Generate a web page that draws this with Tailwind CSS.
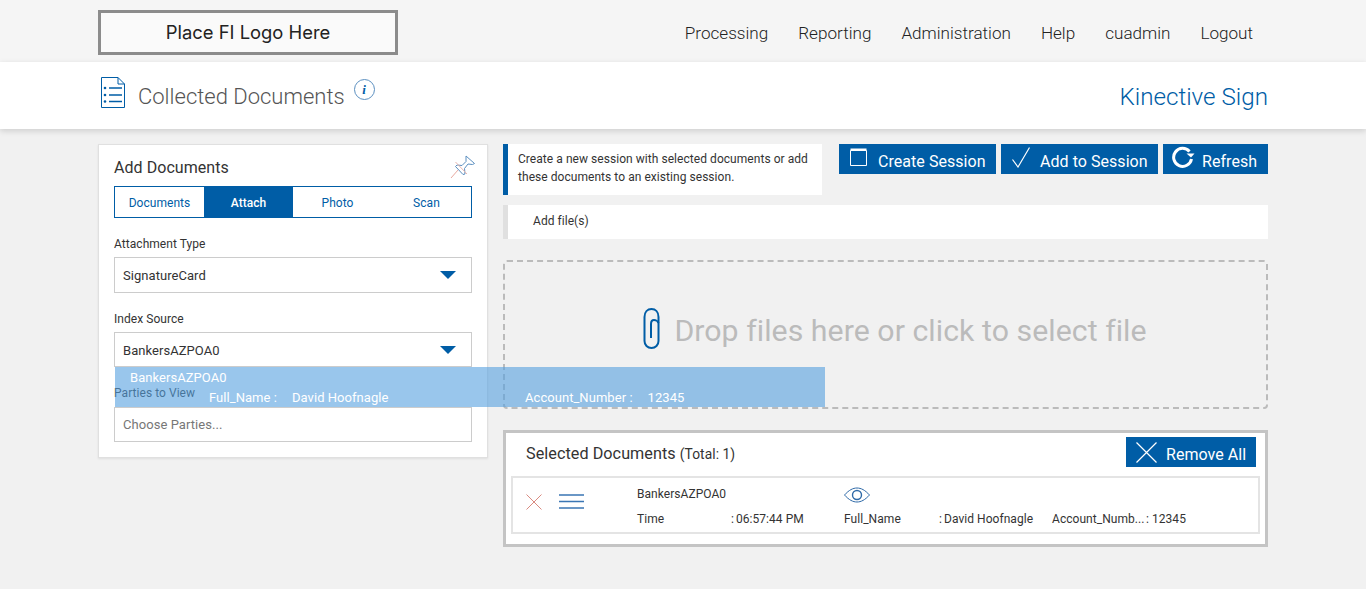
<!DOCTYPE html>
<html lang="en">
<head>
    <meta charset="UTF-8" />
    <meta name="viewport" content="width=device-width, initial-scale=1.0" />
    <title>Collected Documents</title>
    <script src="https://cdn.jsdelivr.net/npm/@tailwindcss/browser@4"></script>
</head>
<body class="h-[589px] overflow-hidden bg-[#f1f1f1] font-['Roboto',sans-serif] text-[#333]">
    <!-- Top nav -->
    <header class="h-[62px] bg-[#f5f5f5] px-[98px] pt-[10px] flex justify-between items-start">
        <div class="w-[300px] h-[45px] border-[3px] border-[#8c8c8c] bg-[#fafafa] flex items-center justify-center font-['Inter',sans-serif] text-[18.4px] text-[#222]">Place FI Logo Here</div>
        <nav class="flex gap-[30px] pr-[15px] pt-[13px] text-[17.1px] font-light text-[#222] leading-[20px]">
            <a href="#">Processing</a>
            <a href="#">Reporting</a>
            <a href="#">Administration</a>
            <a href="#">Help</a>
            <a href="#">cuadmin</a>
            <a href="#">Logout</a>
        </nav>
    </header>

    <!-- Page title -->
    <div class="relative h-[67px] bg-white shadow-[0_2px_6px_rgba(0,0,0,0.15)] px-[98px] flex justify-between">
        <div class="flex items-start">
            <svg class="mt-[15px] ml-[3px]" width="24" height="31" viewBox="0 0 24 31" fill="none" stroke="#005da6">
                <path d="M.5.5H17L23.5 7V30.5H.5Z M17 .5V7H23.5" />
                <path d="M8 11H21M8 18H21M8 24.5H21" stroke-width="1.6" />
                <circle cx="4" cy="11" r="1.3" fill="#005da6" stroke="none" />
                <circle cx="4" cy="18" r="1.3" fill="#005da6" stroke="none" />
                <circle cx="4" cy="24.5" r="1.3" fill="#005da6" stroke="none" />
            </svg>
            <h1 class="ml-[13px] mt-[22px] text-[22px] leading-[26px] font-light text-[#555]">Collected Documents</h1>
            <span class="ml-[9px] mt-[17px] w-[21px] h-[21px] rounded-full border border-[#5b8fc0] flex items-center justify-center font-['Liberation_Serif',serif] italic font-bold text-[13px] text-[#005da6]">i</span>
        </div>
        <div class="mt-[21px] text-[24.2px] leading-[28px] font-light text-[#005da6]">Kinective Sign</div>
    </div>

    <main class="relative px-[98px] pt-[15px] flex gap-[15px] items-start tracking-[0.05px]">
        <!-- Add documents card -->
        <section class="w-[390px] h-[314px] shrink-0 bg-white border border-[#e0e0e0] shadow-[0_1px_2px_rgba(0,0,0,0.08)] px-[15px] pt-[12px]">
            <div class="flex justify-between items-start h-[29px]">
                <h2 class="text-[16px] leading-[22px]">Add Documents</h2>
                <svg class="-mt-[3px] -mr-[4px]" width="26" height="26" viewBox="0 0 26 26" fill="none">
                    <path d="M16 2L24.5 9.5L22.5 10.5L18 10L14.5 14.5L15 20L13 20.5L5.5 12.5L7 11L12 11.5L16 7.5Z" stroke="#5b8fc0" />
                    <path d="M8 16L1 24" stroke="#e8a9a0" />
                    <path d="M5.5 8L17 20" stroke="#e8b5ae" />
                </svg>
            </div>
            <div class="grid grid-cols-4 h-[32px] border border-[#005da6] text-[12px] text-[#005da6]">
                <button class="flex items-center justify-center pt-[1px]">Documents</button>
                <button class="flex items-center justify-center pt-[1px] bg-[#005da6] text-white font-medium">Attach</button>
                <button class="flex items-center justify-center pt-[1px]">Photo</button>
                <button class="flex items-center justify-center pt-[1px]">Scan</button>
            </div>
            <label class="block mt-[19px] text-[12px] leading-[14px]">Attachment Type</label>
            <div class="mt-[6px] h-[36px] border border-[#ccc] pl-[8px] pr-[15px] flex items-center justify-between text-[13px]">
                <span class="mt-[2px]">SignatureCard</span>
                <span class="w-0 h-0 border-x-[8px] border-x-transparent border-t-[8px] border-t-[#005da6]"></span>
            </div>
            <label class="block mt-[19px] text-[12px] leading-[14px]">Index Source</label>
            <div class="mt-[6px] h-[35px] border border-[#ccc] pl-[8px] pr-[15px] flex items-center justify-between text-[13px]">
                <span class="mt-[2px]">BankersAZPOA0</span>
                <span class="w-0 h-0 border-x-[8px] border-x-transparent border-t-[8px] border-t-[#005da6]"></span>
            </div>
            <label class="block mt-[19px] text-[12px] leading-[14px]">Parties to View</label>
            <div class="mt-[7px] h-[35px] border border-[#ccc] pl-[8px] flex items-center text-[13px] text-[#777]">Choose Parties...</div>
        </section>

        <!-- Right column -->
        <div class="w-[765px] shrink-0">
            <div class="flex justify-between items-start">
                <div class="w-[319px] h-[51px] bg-white border-l-[5px] border-[#005da6] pl-[10px] pt-[6px] text-[12px] leading-[18px]">Create a new session with selected documents or add these documents to an existing session.</div>
                <div class="flex gap-[5px]">
                    <button class="w-[157px] h-[30px] bg-[#005da6] text-white text-[16px] flex items-center pl-[11px]">
                        <svg width="17" height="19" viewBox="0 0 17 19" fill="none" stroke="#fff" class="-mt-[4px]"><path d="M.5 2.5H16.5V17.5H.5Z" /><path d="M.5 1.5H16.5" stroke-width="2" /></svg>
                        <span class="ml-[11px] mt-[6px]">Create Session</span>
                    </button>
                    <button class="w-[157px] h-[30px] bg-[#005da6] text-white text-[16px] flex items-center pl-[11px]">
                        <svg width="18" height="21" viewBox="0 0 18 21" fill="none" stroke="#fff" stroke-width="1.2" class="-mt-[3px]"><path d="M.5 12.5L6 20L17.5 .5" /></svg>
                        <span class="ml-[10px] mt-[6px]">Add to Session</span>
                    </button>
                    <button class="w-[105px] h-[30px] bg-[#005da6] text-white text-[16px] flex items-center pl-[9px]">
                        <svg width="23" height="22" viewBox="0 0 23 22" fill="none" class="-mt-[4px]"><path d="M17.5 5.5A9 9 0 1 0 19.5 13" stroke="#fff" stroke-width="3" /><path d="M14.5 7.5H22.5L19 11.5Z" fill="#fff" /></svg>
                        <span class="ml-[7px] mt-[6px]">Refresh</span>
                    </button>
                </div>
            </div>

            <div class="mt-[10px] h-[34px] bg-white border-l-[5px] border-[#e0e0e0] pl-[25px] pb-[2px] flex items-center text-[12px]">Add file(s)</div>

            <div class="mt-[21px] h-[149px] border-2 border-dashed border-[#bbb] rounded-[4px] pb-[8px] pl-[19px] flex items-center justify-center gap-[14px]">
                <svg class="-mt-[5px]" width="17" height="41" viewBox="0 0 17 41" fill="none" stroke="#005da6" stroke-width="2">
                    <path d="M15.5 31V9C15.5 4 12.5 1 8.500 1C4.500 1 1.500 4 1.500 9V33C1.500 37 4.500 40 8.500 40C12.500 40 15.500 37 15.500 33V31" />
                    <path d="M8 30V16C8 13 9.500 12 11 12C12.500 12 15 13 15.500 15" />
                </svg>
                <span class="text-[30.25px] leading-[36px] text-[#bbb]">Drop files here or click to select file</span>
            </div>

            <!-- Selected documents -->
            <section class="mt-[21px] h-[117px] bg-white border-[3px] border-[#c4c4c4] px-[5px] pt-[4px]">
                <div class="flex justify-between items-start h-[39px]">
                    <h2 class="ml-[15px] mt-[6px] text-[16.2px] leading-[22px]">Selected Documents <span class="text-[13.8px]">(Total: 1)</span></h2>
                    <button class="mr-[4px] w-[130px] h-[30px] bg-[#005da6] text-white text-[16px] flex items-center pl-[10px]">
                        <svg width="21" height="21" viewBox="0 0 21 21" stroke="#fff" stroke-width="1.2"><path d="M.5 .5L20.500 20.500M20.500 .5L.5 20.500" /></svg>
                        <span class="ml-[9px] mt-[6px]">Remove All</span>
                    </button>
                </div>
                <div class="h-[58px] border-2 border-[#e4e4e4] flex text-[12px] leading-[14px]">
                    <div class="w-[124px] shrink-0 flex items-start pl-[13px] pt-[16px] gap-[17px]">
                        <svg width="16" height="16" viewBox="0 0 16 16" stroke="#d98a80" stroke-width="1"><path d="M.5 .5L15.500 15.500M15.500 .5L.5 15.500" /></svg>
                        <svg width="25" height="15" viewBox="0 0 25 15" stroke="#3a76b4" stroke-width="1.5"><path d="M0 1H25M0 7.500H25M0 14H25" /></svg>
                    </div>
                    <div class="pt-[9px]">
                        <div class="flex h-[25px]">
                            <div class="w-[207px]">BankersAZPOA0</div>
                            <svg width="26" height="16" viewBox="0 0 26 16" fill="none" stroke="#2f6aa8"><path d="M.5 8C5 3 9 1 13 1S21 3 25.500 8C21 13 17 15 13 15S5 13 .5 8Z" /><circle cx="13" cy="8" r="4.500" stroke-width="1.400" /></svg>
                        </div>
                        <div class="flex">
                            <div class="w-[94px]">Time</div>
                            <div class="w-[113px]">:<span class="ml-[2px]">06:57:44 PM</span></div>
                            <div class="w-[95px]">Full_Name</div>
                            <div class="w-[113px]">:<span class="ml-[2px]">David Hoofnagle</span></div>
                            <div class="w-[94px]">Account_Numb...</div>
                            <div>:<span class="ml-[3px]">12345</span></div>
                        </div>
                    </div>
                </div>
            </section>
        </div>

        <!-- Drag preview over the page -->
        <div class="absolute left-[115px] top-[238px] w-[710px] h-[40px] bg-[#55a0df]/60 text-white text-[13px] leading-[14px] pl-[15px] pt-[4px]">
            <div>BankersAZPOA0</div>
            <div class="flex mt-[6px] pl-[79px]">
                <div class="w-[316px] flex gap-[15px]"><span>Full_Name :</span><span>David Hoofnagle</span></div>
                <div class="flex gap-[15px]"><span>Account_Number :</span><span>12345</span></div>
            </div>
        </div>
    </main>
</body>
</html>
